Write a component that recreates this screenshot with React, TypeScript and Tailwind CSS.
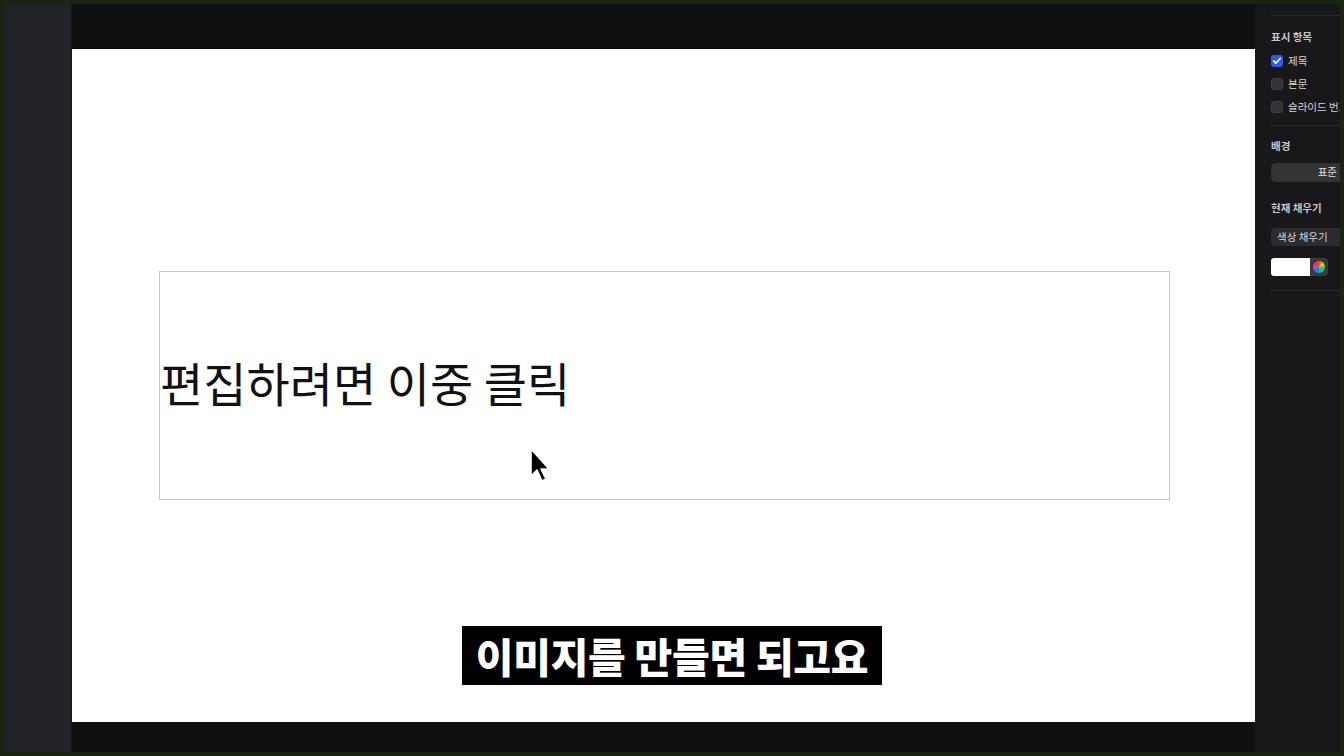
import { Check } from 'lucide-react';

const kr = { fontFamily: '"Noto Sans CJK KR", "Noto Sans", sans-serif' };

function Box({ checked, label }: { checked?: boolean; label: string }) {
  return (
    <div className="flex items-center gap-[5px] h-[23px]">
      {checked ? (
        <div className="w-[12px] h-[12px] shrink-0 rounded-[3px] bg-[#2d5ce6] flex items-center justify-center">
          <Check className="w-[10px] h-[10px] text-white" strokeWidth={4} />
        </div>
      ) : (
        <div className="w-[12px] h-[12px] shrink-0 rounded-[3px] bg-[#333337] border border-[#404044]" />
      )}
      <span className="text-[10.5px] text-[#d6d6d6] whitespace-nowrap">{label}</span>
    </div>
  );
}

function Cursor() {
  return (
    <svg className="absolute left-[456px] top-[398px]" width="26" height="38" viewBox="0 0 26 38">
      <path d="M3 2 L3 29 L9 23 L14 34 L18 32 L13 22 L21 22 Z" fill="#000" stroke="#fff" strokeWidth="1.6" strokeLinejoin="round" />
    </svg>
  );
}

export default function App() {
  return (
    <div className="w-[1344px] h-[756px] bg-[#1a2412] p-[4px] overflow-hidden" style={kr}>
      <div className="flex h-full">
        <div className="w-[68px] shrink-0 bg-[#222227] border-r border-[#151518]" />
        <div className="w-[1183px] shrink-0 flex flex-col bg-[#101012]">
          <div className="h-[45px]" />
          <div className="relative h-[673px] bg-white">
            <div className="absolute left-[87px] top-[222px] w-[1011px] h-[229px] border border-[#c6c6c6] flex items-center">
              <span className="text-[47px] leading-none text-[#111] whitespace-nowrap -mt-[8px]">편집하려면 이중 클릭</span>
            </div>
            <Cursor />
            <div className="absolute left-[390px] top-[577px] w-[420px] h-[59px] bg-black flex items-center justify-center">
              <span className="text-[41px] font-black text-white leading-none tracking-[-0.3px] whitespace-nowrap">이미지를 만들면 되고요</span>
            </div>
          </div>
          <div className="flex-1" />
        </div>
        <div className="flex-1 bg-[#18181b] pl-[16px] overflow-hidden">
          <div className="h-[12px] border-b border-[#2a2a2e]" />
          <div className="pt-[13px] text-[10.5px] font-bold text-[#c8c8c8] whitespace-nowrap">표시 항목</div>
          <div className="pt-[5px]">
            <Box checked label="제목" />
            <Box label="본문" />
            <Box label="슬라이드 번호" />
          </div>
          <div className="mt-[6px] border-b border-[#2a2a2e]" />
          <div className="pt-[12px] text-[10.5px] font-bold text-[#c8c8c8]">배경</div>
          <div className="mt-[9px] h-[19px] rounded-l-[5px] bg-[#333336] flex items-center justify-end pr-[3px] text-[10.5px] text-[#e0e0e0]">표준</div>
          <div className="pt-[18px] text-[10.5px] font-bold text-[#c8c8c8] whitespace-nowrap">현재 채우기</div>
          <div className="mt-[13px] h-[18px] rounded-l-[4px] bg-[#2c2c30] flex items-center pl-[6px] text-[10.5px] text-[#d8d8d8] whitespace-nowrap">색상 채우기</div>
          <div className="mt-[12px] flex items-center">
            <div className="w-[39px] h-[18px] bg-white rounded-l-[3px]" />
            <div className="w-[18px] h-[18px] bg-[#3a3a3e] rounded-r-[4px] flex items-center justify-center">
              <div className="w-[12px] h-[12px] rounded-full" style={{ background: 'conic-gradient(#ff3b30, #ffcc00, #34c759, #00c7be, #007aff, #af52de, #ff2d55, #ff3b30)' }} />
            </div>
          </div>
          <div className="mt-[14px] border-b border-[#2a2a2e]" />
        </div>
      </div>
    </div>
  );
}
